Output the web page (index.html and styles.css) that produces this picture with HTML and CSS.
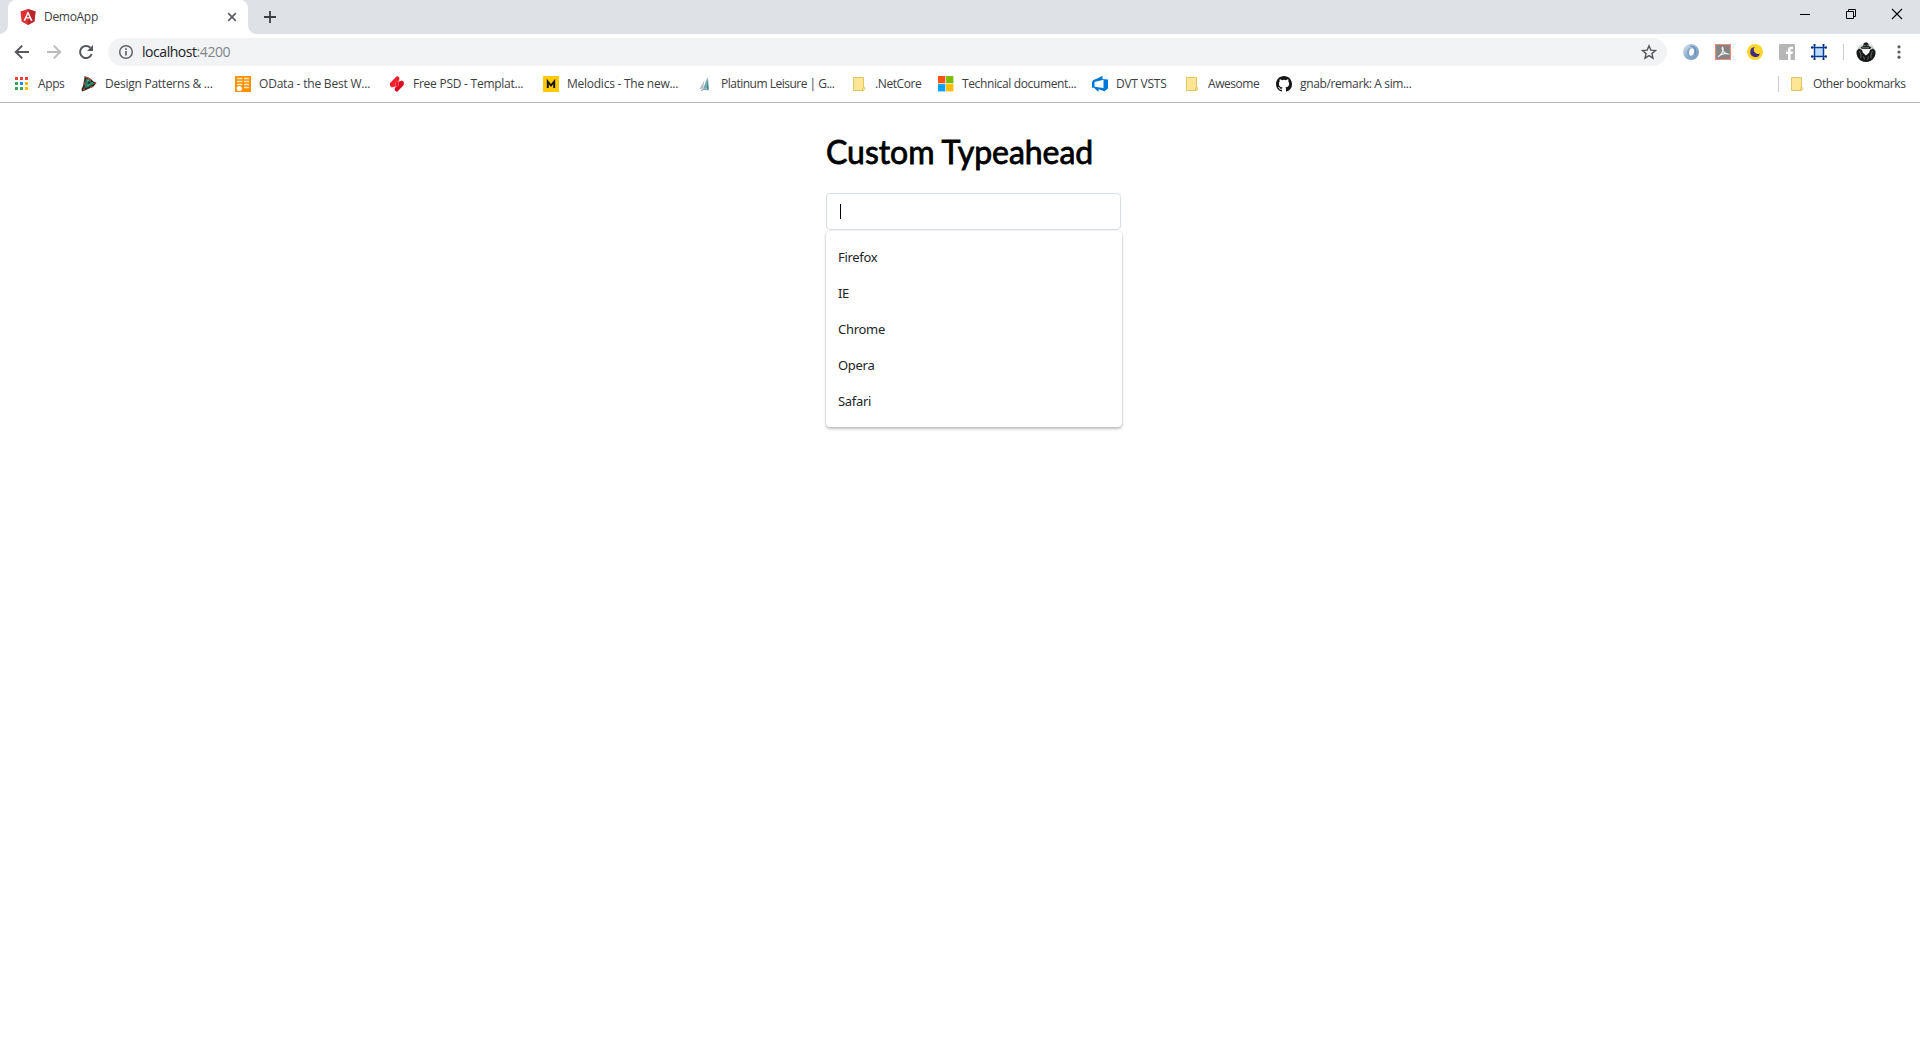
FILE: index.html
```html
<!DOCTYPE html>
<html lang="en">
<head>
<meta charset="utf-8">
<title>DemoApp</title>
<link rel="stylesheet" href="styles.css">
</head>
<body>
<header class="browser">
  <div class="tabstrip">
    <div class="tab">
      <svg class="favicon" width="16" height="16" viewBox="0 0 16 16"><path fill="#dd3035" d="M8 0l7.500 2.600-1.100 10L8 16l-6.400-3.400L.5 2.600z"/><path fill="#b9262b" d="M8 0l7.500 2.600-1.100 10L8 16z"/><path fill="#fff" fill-rule="evenodd" d="M8 2l4.500 9.800h-1.800l-.9-2.200H6.200l-.9 2.200H3.500zm0 3.200L6.700 8.200h2.600z"/></svg>
      <span class="tab-title">DemoApp</span>
      <svg class="tab-close" width="10" height="10" viewBox="0 0 10 10"><path d="M1.200 1.200l7.600 7.600M8.800 1.200L1.200 8.800" stroke="#5a5e63" stroke-width="1.700"/></svg>
    </div>
    <svg class="new-tab" width="12" height="12" viewBox="0 0 12 12"><path d="M6 0v12M0 6h12" stroke="#3c4043" stroke-width="1.800"/></svg>
    <div class="window-buttons">
      <svg width="46" height="28" viewBox="0 0 46 28"><path d="M18 14.500h10" stroke="#000"/></svg>
      <svg width="46" height="28" viewBox="0 0 46 28" fill="none" stroke="#000"><path d="M18.500 11.500h7v7h-7zM20.500 11.500v-2h7v7h-2"/></svg>
      <svg width="46" height="28" viewBox="0 0 46 28"><path d="M18 9l10 10M28 9L18 19" stroke="#000" stroke-width="1.100"/></svg>
    </div>
  </div>
  <div class="toolbar">
    <svg class="nav" width="16" height="16" viewBox="0 0 16 16"><path d="M15 8H2M8.200 1.600L1.800 8l6.400 6.400" fill="none" stroke="#54585d" stroke-width="2"/></svg>
    <svg class="nav" width="16" height="16" viewBox="0 0 16 16"><path d="M1 8h13M7.800 1.600L14.200 8l-6.400 6.400" fill="none" stroke="#babcbe" stroke-width="2"/></svg>
    <svg class="nav" width="16" height="16" viewBox="0 0 16 16"><path d="M13.700 10A6 6 0 1 1 12.300 3.800" fill="none" stroke="#54585d" stroke-width="2"/><path d="M15 1v6H9z" fill="#54585d"/></svg>
    <div class="omnibox">
      <svg width="16" height="16" viewBox="0 0 16 16"><circle cx="8" cy="8" r="6.300" fill="none" stroke="#5f6368" stroke-width="1.500"/><path d="M8 7v4.500M8 4.300v1.700" stroke="#5f6368" stroke-width="1.700"/></svg>
      <span class="url">localhost<span class="port">:4200</span></span>
      <svg class="star" width="16" height="16" viewBox="0 0 16 16"><path d="M8 1.800l1.800 4.300 4.700.4-3.600 3.100 1.100 4.600L8 11.700l-4 2.500 1.100-4.600L1.500 6.500l4.700-.4z" fill="none" stroke="#54585d" stroke-width="1.400"/></svg>
    </div>
    <div class="extensions">
      <svg width="16" height="16" viewBox="0 0 16 16"><defs><linearGradient id="swirl" x2="1" y2="1"><stop stop-color="#dbe8f4"/><stop offset=".5" stop-color="#91b1d0"/><stop offset="1" stop-color="#6f95bd"/></linearGradient></defs><circle cx="8" cy="8" r="8" fill="url(#swirl)"/><path d="M8.500 4C5.500 3.500 3 6.500 4.500 10.500c1.200 2.500 4 3.500 6.500 2.500-3-.5-5-2-5-4.700C6 6 7 4.500 8.500 4z" fill="#7fa3c7"/><path d="M8.800 4.200c2.200.3 2.800 2.300 2.100 4.500-.6 2-2.200 3.400-3.400 3-2.200-1-1.700-6.700 1.300-7.500z" fill="#fff"/><path d="M7 2c4.500 0 7 4 5 8.500" fill="none" stroke="#628bb4" stroke-width="1.200"/></svg>
      <svg width="16" height="16" viewBox="0 0 16 16"><path fill="#858585" d="M0 0h16v16H0z"/><path d="M.5.500h15v15H.5z" fill="none" stroke="#ec8b80" stroke-width="1.200"/><path d="M3 12.600C5.500 12 9.500 6 7.600 3.300c-1.400 1 1 6.700 5.400 6.700-2-1.400-7 0-10 2.600z" fill="none" stroke="#eee" stroke-width="1.200"/></svg>
      <svg width="16" height="16" viewBox="0 0 16 16"><circle cx="8" cy="8" r="8" fill="#fdd52f"/><path d="M7.800 3A5 5 0 1 0 13 9.400 4.200 4.200 0 0 1 7.800 3z" fill="#402b80"/></svg>
      <svg width="16" height="16" viewBox="0 0 16 16"><rect width="16" height="16" rx="1" fill="#b6b6b6"/><path d="M9 16v-6H7V7.500h2V6c0-2.200 1.200-3.300 3.200-3.300H14v2.400h-1.200c-1 0-1.200.5-1.200 1.200v1.200h2.300l-.3 2.500h-2v6z" fill="#fff"/></svg>
      <svg width="16" height="16" viewBox="0 0 16 16"><path d="M4 4h8v8H4z" fill="#bddcff"/><path d="M3.500 1v14M12.500 1v14M1 3.500h14M1 12.500h14" stroke="#0b3d94" stroke-width="1.500"/><path d="M0 2.500h2v2H0zm14 0h2v2h-2zM0 11.500h2v2H0zm14 0h2v2h-2zM2.500 0h2v1.500h-2zm9 0h2v1.500h-2zm-9 14.500h2V16h-2zm9 0h2V16h-2z" fill="#082f78"/></svg>
    </div>
    <span class="divider toolbar-divider"></span>
    <svg class="avatar" width="20" height="20" viewBox="0 0 20 20"><circle cx="10" cy="10.500" r="9.500" fill="#d4d9d6"/><path d="M.6 9L3 6.500 6 8l4 5 4-5 3-1.500L19.400 9c.8 5.500-3 11-9.400 11S-.2 14.500.6 9z" fill="#161917"/><path d="M4.500 5.500L7 4l1-3 2-.8L12 1l1 3 2.500 1.500L14 7H6z" fill="#202622"/><path d="M7.500 3.600h2M11 3.600h2M6 5.800h7" stroke="#8b948e" stroke-width=".8"/><path d="M6 7.200h8l-.8 3.300L10 13.500l-3.200-3z" fill="#f6f7f6"/><path d="M3.500 9l1.500 4v3M16.500 9L15 13v3M7.500 14.500l1 3M12.500 14.500l-1 3" fill="none" stroke="#737b75" stroke-width=".8"/></svg>
    <svg class="menu" width="4" height="14" viewBox="0 0 4 14" fill="#5a5e63"><circle cx="2" cy="1.800" r="1.600"/><circle cx="2" cy="7" r="1.600"/><circle cx="2" cy="12.200" r="1.600"/></svg>
  </div>
  <nav class="bookmarks">
    <a class="bookmark apps"><svg width="16" height="16" viewBox="0 0 16 16"><path fill="#ea4335" d="M1 1h3v3H1zm5 0h3v3H6zm5 0h3v3h-3z"/><path fill="#34a853" d="M1 6h3v3H1zm0 5h3v3H1zm5 0h3v3H6z"/><path fill="#1a8cff" d="M6 6h3v3H6z"/><path fill="#fbbc05" d="M11 6h3v3h-3zm0 5h3v3h-3z"/></svg><span>Apps</span></a>
    <a class="bookmark"><svg width="16" height="16" viewBox="0 0 16 16"><path d="M3.500.3l3 .7L10 3l2.500 2.500L15.500 7 12 11l-5 2-3 1.500L1 15.500l-.5-2.500L2 10l1-5z" fill="#2f2a24"/><path d="M5 2.500l3 .5 2 3 3.500 1.500L10 9.500l-3.500 2-3 .5L4 8z" fill="#267a60"/><path d="M4 1l3.500 1.200L10 4.500M13.500 7l1.500.3M2 14l2-1.500M9 11.500l2.500-1.200M3.200 6v3" fill="none" stroke="#c9493c" stroke-width="1.300"/><path d="M5.500 5l2.500-.5M6 9.500l3-1M10 7h2" stroke="#48b28e"/><path d="M7 6.500l2 .6" stroke="#241b18" stroke-width="1.400"/></svg><span>Design Patterns &amp; ...</span></a>
    <a class="bookmark odata"><svg width="16" height="16" viewBox="0 0 16 16"><path fill="#ff9000" d="M0 0h16v16H0z"/><path d="M2 2.500h5.500M9 2.500h5M2 5.500h5.500M9 5.500h5M2 8.500h5.500M9 8.500h5M9 11.500h5" stroke="#ffe7bf" stroke-width="1.600"/><circle cx="4.300" cy="12.500" r="2.600" fill="#fff"/></svg><span>OData - the Best W...</span></a>
    <a class="bookmark"><svg width="16" height="16" viewBox="0 0 16 16"><path d="M8 0l2.300 1.300v2.900L6.500 6.600v3.600L3 11.500 1 9.800V6.900z" fill="#f5202c"/><path d="M8 16l-2.200-1.500v-2.700l3.700-2.400V5.800L13 4.400l1.800 1.500v3z" fill="#d80d20"/><path d="M6.500 6.600l3-1.800v4.600l-3 1.800z" fill="#e8172a"/></svg><span>Free PSD - Templat...</span></a>
    <a class="bookmark"><svg width="16" height="16" viewBox="0 0 16 16"><path fill="#ffca05" d="M0 0h16v16H0z"/><path d="M4.800 12V5.500L8 9.500l3.200-4V12" fill="none" stroke="#171717" stroke-width="2"/></svg><span>Melodics - The new...</span></a>
    <a class="bookmark platinum"><svg width="16" height="16" viewBox="0 0 16 16"><path d="M7.500 4L2.500 13l3.500-.5z" fill="#b4babd"/><path d="M10.500 1L6 13l5-.5z" fill="#78aab4"/><path d="M11 1.500L9.800 13l1.900.5z" fill="#39808f"/><path d="M4 14.500c3-1.500 5-1 8-.5" fill="none" stroke="#84969c"/></svg><span>Platinum Leisure | G...</span></a>
    <a class="bookmark netcore"><svg width="16" height="16" viewBox="0 0 16 16"><path d="M2.500 1.500h10V11c1 .2 1.200.8 1.200 1.500 0 1.300-.6 2-1.500 2H2.500z" fill="#ffe694" stroke="#e6c65e"/><path d="M12.500 11c-1 .5-1 1.600-.8 3.500" fill="none" stroke="#e0bd48"/></svg><span>.NetCore</span></a>
    <a class="bookmark technical"><svg width="16" height="16" viewBox="0 0 16 16"><path fill="#f65314" d="M0 0h7.300v7.300H0z"/><path fill="#7cbb00" d="M8.100 0h7.300v7.300H8.100z"/><path fill="#00a1f1" d="M0 8.100h7.300v7.300H0z"/><path fill="#ffbb00" d="M8.100 8.100h7.300v7.300H8.100z"/></svg><span>Technical document...</span></a>
    <a class="bookmark vsts"><svg width="16" height="16" viewBox="0 0 16 16"><path d="M0 6l1.500-2 4.800-2L10.500-.2V3L16 3.600v8.800l-3.500 2.900-6-2V16L2 11.800H0zm2.500 0v4.800l9 1.200V3.800z" fill="#0078d7" fill-rule="evenodd"/></svg><span>DVT VSTS</span></a>
    <a class="bookmark awesome"><svg width="16" height="16" viewBox="0 0 16 16"><path d="M2.500 1.500h10V11c1 .2 1.200.8 1.200 1.500 0 1.300-.6 2-1.500 2H2.500z" fill="#ffe694" stroke="#e6c65e"/><path d="M12.500 11c-1 .5-1 1.600-.8 3.500" fill="none" stroke="#e0bd48"/></svg><span>Awesome</span></a>
    <a class="bookmark gnab"><svg width="16" height="16" viewBox="0 0 16 16"><path fill="#171515" d="M8 0C3.580 0 0 3.580 0 8c0 3.540 2.290 6.530 5.470 7.590.4.070.55-.17.55-.38 0-.19-.010-.82-.010-1.490-2.010.37-2.530-.49-2.690-.94-.090-.23-.48-.94-.82-1.130-.28-.15-.68-.52-.010-.53.630-.010 1.080.58 1.230.82.720 1.210 1.870.87 2.330.66.070-.52.280-.87.510-1.070-1.780-.2-3.640-.89-3.640-3.950 0-.87.310-1.590.82-2.150-.080-.2-.36-1.020.080-2.120 0 0 .67-.21 2.200.82a7.600 7.600 0 0 1 4 0c1.530-1.040 2.200-.82 2.200-.82.440 1.100.16 1.920.080 2.120.51.560.82 1.270.82 2.150 0 3.070-1.870 3.750-3.650 3.950.29.250.54.730.54 1.480 0 1.070-.010 1.930-.010 2.200 0 .21.150.46.550.38A8.010 8.010 0 0 0 16 8c0-4.420-3.580-8-8-8z"/></svg><span>gnab/remark: A sim...</span></a>
    <span class="divider bookmarks-divider"></span>
    <a class="bookmark other"><svg width="16" height="16" viewBox="0 0 16 16"><path d="M2.500 1.500h10V11c1 .2 1.200.8 1.200 1.500 0 1.300-.6 2-1.500 2H2.500z" fill="#ffe694" stroke="#e6c65e"/><path d="M12.500 11c-1 .5-1 1.600-.8 3.500" fill="none" stroke="#e0bd48"/></svg><span>Other bookmarks</span></a>
  </nav>
</header>
<main class="page">
  <h1>Custom Typeahead</h1>
  <div class="field"><span class="caret"></span></div>
  <ul class="options">
    <li>Firefox</li>
    <li>IE</li>
    <li>Chrome</li>
    <li>Opera</li>
    <li>Safari</li>
  </ul>
</main>
</body>
</html>
```
FILE: styles.css
```css
* { box-sizing: border-box; }
body { margin: 0; background: #fff; height: 1040px; overflow: hidden; font-family: "Open Sans", "Noto Sans", sans-serif; }
svg { display: block; flex: none; overflow: visible; }
.browser { height: 103px; border-bottom: 1px solid #b5b6b6; font-size: 12px; color: #3c4043; white-space: nowrap; }

.tabstrip { display: flex; height: 34px; background: #dee1e6; padding-left: 8px; }
.tab { position: relative; display: flex; align-items: center; width: 240px; padding: 0 11px 0 12px; background: #fff; border-radius: 8px 8px 0 0; }
.tab::before, .tab::after { content: ""; position: absolute; bottom: 0; width: 8px; height: 8px; }
.tab::before { left: -8px; background: radial-gradient(circle at 0 0, transparent 7.5px, #fff 8px); }
.tab::after { right: -8px; background: radial-gradient(circle at 100% 0, transparent 7.5px, #fff 8px); }
.tab-title { margin: -1px 0 0 8px; letter-spacing: -0.3px; }
.tab-close { margin-left: auto; }
.new-tab { margin: 11px 0 0 16px; }
.window-buttons { display: flex; margin-left: auto; }

.toolbar { display: flex; align-items: center; height: 36px; padding-left: 14px; }
.nav { margin-right: 16px; }
.omnibox { display: flex; align-items: center; width: 1559px; height: 28px; margin-left: -2px; padding: 0 10px; border-radius: 14px; background: #f1f3f4; }
.url { margin: -2px 0 0 8px; font-size: 14px; letter-spacing: -0.45px; color: #202124; }
.port { color: #80868b; }
.star { margin-left: auto; }
.extensions { display: flex; gap: 16px; margin-left: 16px; }
.divider { width: 1px; height: 16px; background: #c9cbce; }
.toolbar-divider { margin-left: 16px; }
.avatar { margin-left: 12px; }
.menu { margin-left: 21px; }

.bookmarks { display: flex; align-items: center; height: 28px; padding-left: 14px; }
.bookmark { display: flex; align-items: center; gap: 8px; flex: none; width: 154px; letter-spacing: -0.25px; }
.bookmark span { margin-top: -2px; }
.apps { width: 67px; letter-spacing: -0.4px; }
.odata { letter-spacing: -0.2px; }
.platinum { letter-spacing: -0.5px; }
.netcore { width: 87px; letter-spacing: -0.4px; }
.technical, .gnab { letter-spacing: -0.37px; }
.vsts, .awesome { width: 92px; }
.awesome { letter-spacing: -0.45px; }
.bookmarks-divider { margin-left: auto; margin-right: 10px; }
.other { width: 131px; letter-spacing: -0.4px; }

.page { width: 296px; margin-left: 826px; }
h1 { margin: 29px 0 0; height: 61px; font: 400 32px/40px Lato, sans-serif; letter-spacing: -0.04px; color: #000; -webkit-text-stroke: 0.8px #000; white-space: nowrap; }
.field { display: flex; align-items: center; width: 295px; height: 37px; padding-left: 13px; border: 1px solid #d8dfe6; border-radius: 4px; }
.caret { width: 1px; height: 15px; background: #000; }
.options { margin: 1px 0 0; padding: 8px 0; list-style: none; border-radius: 4px; box-shadow: 0 2px 3px rgba(0, 0, 0, .24), 0 0 2px rgba(0, 0, 0, .16); font: 13px/36px "Noto Sans", sans-serif; letter-spacing: -0.3px; color: #212529; }
.options li { height: 36px; padding-left: 12px; }
```
